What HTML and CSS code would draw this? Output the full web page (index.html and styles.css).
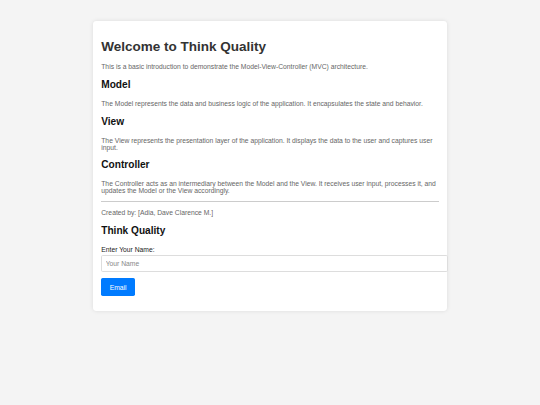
FILE: index.html
```html
<!DOCTYPE html>
<html lang="en">
<head>
<meta charset="utf-8">
<title>Think Quality - MVC</title>
<link rel="stylesheet" href="styles.css">
</head>
<body>
<div class="container">
  <h1 class="title">Welcome to Think Quality</h1>
  <p class="text intro">This is a basic introduction to demonstrate the Model-View-Controller (MVC) architecture.</p>

  <h2 class="heading">Model</h2>
  <p class="text">The Model represents the data and business logic of the application. It encapsulates the state and behavior.</p>

  <h2 class="heading">View</h2>
  <p class="text">The View represents the presentation layer of the application. It displays the data to the user and captures user input.</p>

  <h2 class="heading">Controller</h2>
  <p class="text">The Controller acts as an intermediary between the Model and the View. It receives user input, processes it, and updates the Model or the View accordingly.</p>

  <hr class="divider">
  <p class="credit">Created by: [Adia, Dave Clarence M.]</p>

  <h2 class="heading">Think Quality</h2>
  <form class="form">
    <label class="label" for="name">Enter Your Name:</label>
    <input class="input" type="text" id="name" placeholder="Your Name">
    <button class="button" type="button">Email</button>
  </form>
</div>
</body>
</html>
```
FILE: styles.css
```css
html, body {
  margin: 0;
  padding: 0;
}
body {
  background: #f4f4f4;
  font-family: "Liberation Sans", Arial, Helvetica, sans-serif;
  font-size: 6.75px;
  color: #333;
}
.container {
  width: 337.5px;
  margin: 21.1px auto;
  padding: 8.44px;
  background: #fff;
  border-radius: 3.4px;
  box-shadow: 0 0 4px rgba(0, 0, 0, 0.1);
}
.title {
  font-size: 13.5px;
  color: #333;
  margin: 9.05px 0;
}
.heading {
  font-size: 10.125px;
  color: #111;
  margin: 8.6px 0 9.9px;
}
.text {
  font-size: 6.75px;
  color: #666;
  margin: 6.75px 0;
}
.intro {
  margin-bottom: 9.8px;
}
.divider {
  border: 0;
  border-top: 0.85px solid #ccc;
  margin: 3.6px 0;
}
.credit {
  font-size: 6.75px;
  color: #666;
  margin: 7.2px 0;
}
.form {
  display: block;
  margin-bottom: 6.75px;
}
.label {
  display: block;
  font-size: 6.75px;
  color: #222;
  margin-bottom: 2.1px;
}
.input {
  display: block;
  width: 100%;
  padding: 3.9px 3.4px;
  font-family: inherit;
  font-size: 6.75px;
  border: 0.85px solid #ddd;
  border-radius: 1.7px;
  margin-bottom: 6.8px;
  color: #333;
}
.input::placeholder {
  color: #888;
}
.button {
  display: block;
  background: #007bff;
  color: #fff;
  border: 0;
  border-radius: 1.7px;
  padding: 5.2px 8.44px;
  font-family: inherit;
  font-size: 6.75px;
}
```
